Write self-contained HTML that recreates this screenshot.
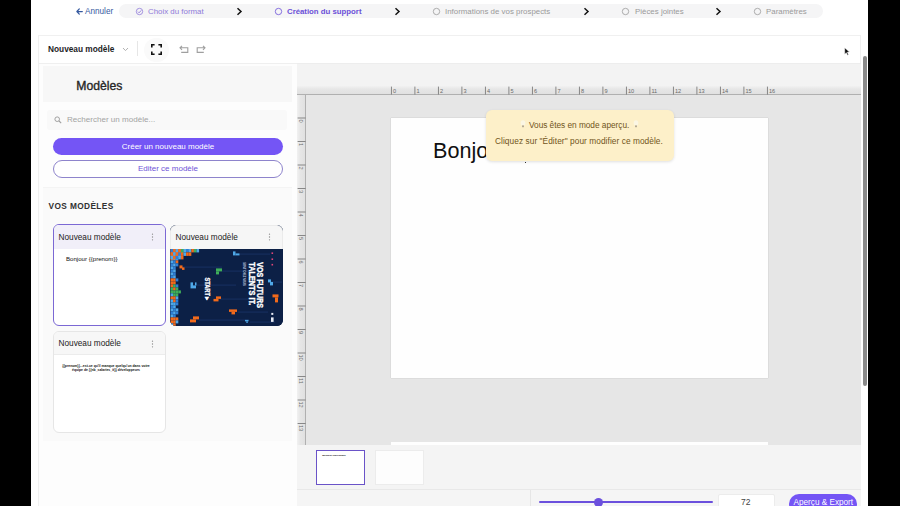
<!DOCTYPE html>
<html lang="fr">
<head>
<meta charset="utf-8">
<title>Création du support</title>
<style>
*{box-sizing:border-box;margin:0;padding:0}
html,body{width:900px;height:506px;overflow:hidden;background:#000}
body{font-family:"Liberation Sans",sans-serif;position:relative;color:#222}
.abs{position:absolute}
.t{position:absolute;white-space:nowrap;line-height:1}
#page{position:absolute;left:31px;top:0;width:837px;height:506px;background:#fff;overflow:hidden}
/* coordinates inside #page are offset by -31 ; use wrapper */
#w{position:absolute;left:-31px;top:0;width:900px;height:506px}
.nav{font-size:8px}
.pill{left:119px;top:4px;width:704px;height:14px;border-radius:7px;background:#f5f5f6}
.chev{width:7px;height:9px}
.step-ic{width:9px;height:9px;margin-top:-0.4px}
#card{left:38px;top:34.5px;width:823px;height:480px;border:1px solid #f0f0f0;background:#fff}
#side{left:39px;top:63px;width:258px;height:450px;background:#fdfdfd;border-top:1px solid #efefef}
#canvasTop{left:297px;top:63px;width:564px;height:24px;background:#f3f3f3;border-top:1px solid #ededed}
#rulerH{left:297px;top:88px;width:564px;height:7px;background:#dedede;border-bottom:1px solid #8e8e8e}
#rulerV{left:297px;top:95px;width:9px;height:350px;background:#dedede;border-right:1px solid #8e8e8e}
#canvas{left:306px;top:95px;width:555px;height:350px;background:#e6e6e6}
.btn{left:53px;width:230px;height:18px;border-radius:9px;font-size:8px;text-align:center;line-height:17px}
.mcard{width:113px;height:102px;border-radius:6px;background:#fff;overflow:hidden}
.mhead{left:0;top:0;width:100%;height:24px}
</style>
</head>
<body>
<div id="page"><div id="w">

<!-- top navigation -->
<svg class="abs" style="left:75.5px;top:7.7px" width="7" height="7" viewBox="0 0 7 7"><path d="M3.3 0.9 L0.9 3.5 L3.3 6.1 M1 3.5 H6.3" fill="none" stroke="#35599f" stroke-width="1.25" stroke-linecap="round" stroke-linejoin="round"/></svg>
<div class="t nav" style="left:85px;top:7.8px;color:#35599f;font-size:8.2px">Annuler</div>
<div class="abs pill"></div>

<svg class="abs step-ic" style="left:135px;top:7px" viewBox="0 0 9 9"><circle cx="4.5" cy="4.5" r="3.2" fill="none" stroke="#8f7ad9" stroke-width="0.8"/><path d="M2.9 4.6 L4.1 5.8 L6.2 3.4" fill="none" stroke="#8f7ad9" stroke-width="0.9"/></svg>
<div class="t nav" style="left:148px;top:7.8px;color:#8f7ad9;font-size:7.9px">Choix du format</div>
<svg class="abs chev" style="left:236px;top:7px" viewBox="0 0 7 9"><path d="M1.5 1.2 L5 4.5 L1.5 7.8" fill="none" stroke="#111" stroke-width="1.5"/></svg>

<svg class="abs step-ic" style="left:274px;top:7px" viewBox="0 0 9 9"><circle cx="4.5" cy="4.5" r="3.2" fill="none" stroke="#6b50d8" stroke-width="0.8"/></svg>
<div class="t nav" style="left:287px;top:7.8px;color:#6b50d8;font-weight:bold;font-size:7.8px">Création du support</div>
<svg class="abs chev" style="left:394px;top:7px" viewBox="0 0 7 9"><path d="M1.5 1.2 L5 4.5 L1.5 7.8" fill="none" stroke="#111" stroke-width="1.5"/></svg>

<svg class="abs step-ic" style="left:432px;top:7px" viewBox="0 0 9 9"><circle cx="4.5" cy="4.5" r="3.2" fill="none" stroke="#9a9a9a" stroke-width="0.8"/></svg>
<div class="t nav" style="left:445px;top:7.8px;color:#9a9a9a;font-size:7.9px">Informations de vos prospects</div>
<svg class="abs chev" style="left:583px;top:7px" viewBox="0 0 7 9"><path d="M1.5 1.2 L5 4.5 L1.5 7.8" fill="none" stroke="#111" stroke-width="1.5"/></svg>

<svg class="abs step-ic" style="left:621px;top:7px" viewBox="0 0 9 9"><circle cx="4.5" cy="4.5" r="3.2" fill="none" stroke="#9a9a9a" stroke-width="0.8"/></svg>
<div class="t nav" style="left:635px;top:7.8px;color:#9a9a9a;font-size:7.9px">Pièces jointes</div>
<svg class="abs chev" style="left:715px;top:7px" viewBox="0 0 7 9"><path d="M1.5 1.2 L5 4.5 L1.5 7.8" fill="none" stroke="#111" stroke-width="1.5"/></svg>

<svg class="abs step-ic" style="left:753px;top:7px" viewBox="0 0 9 9"><circle cx="4.5" cy="4.5" r="3.2" fill="none" stroke="#9a9a9a" stroke-width="0.8"/></svg>
<div class="t nav" style="left:766px;top:7.8px;color:#9a9a9a;font-size:7.9px">Paramètres</div>

<!-- main card -->
<div class="abs" id="card"></div>

<!-- toolbar -->
<div class="t" style="left:48px;top:45px;font-size:8.3px;font-weight:bold;color:#1d1d1f">Nouveau modèle</div>
<svg class="abs" style="left:122px;top:47px" width="7" height="5" viewBox="0 0 7 5"><path d="M1 1 L3.5 3.6 L6 1" fill="none" stroke="#a9a9a9" stroke-width="0.9"/></svg>
<div class="abs" style="left:137px;top:41px;width:1px;height:15px;background:#e6e6e6"></div>
<div class="abs" style="left:144px;top:37.5px;width:25px;height:24px;border-radius:12px;background:#fafafa"></div>
<svg class="abs" style="left:151px;top:44px" width="11" height="11" viewBox="0 0 11 11"><path d="M0.8 3.6 V0.8 H3.6 M7.4 0.8 H10.2 V3.6 M10.2 7.4 V10.2 H7.4 M3.6 10.2 H0.8 V7.4" fill="none" stroke="#111" stroke-width="1.6"/></svg>
<svg class="abs" style="left:179px;top:44.6px" width="10" height="9" viewBox="0 0 10 9"><path d="M3 0.8 L1 2.8 L3 4.8 M1.2 2.8 H8.8 V7.4 H2.2" fill="none" stroke="#9f9f9f" stroke-width="1.1"/></svg>
<svg class="abs" style="left:196px;top:44.6px" width="10" height="9" viewBox="0 0 10 9"><path d="M7 0.8 L9 2.8 L7 4.8 M8.8 2.8 H1.2 V7.4 H7.8" fill="none" stroke="#9f9f9f" stroke-width="1.1"/></svg>

<!-- SIDEBAR -->
<div class="abs" id="side"></div>
<div class="abs" style="left:43px;top:66px;width:249px;height:36px;background:#f7f7f7"></div>
<div class="t" style="left:76.3px;top:80px;font-size:12.2px;color:#262626;-webkit-text-stroke:0.35px #262626">Modèles</div>

<div class="abs" style="left:47px;top:110px;width:240px;height:20px;background:#f9f9f9;border-radius:3px"></div>
<svg class="abs" style="left:54px;top:116px" width="8" height="8" viewBox="0 0 8 8"><circle cx="3.2" cy="3.2" r="2.3" fill="none" stroke="#a0a0a0" stroke-width="1"/><path d="M5 5 L7.2 7.2" stroke="#a0a0a0" stroke-width="1.1"/></svg>
<div class="t" style="left:67px;top:116px;font-size:8.05px;color:#a3a3a3">Rechercher un modèle...</div>

<div class="abs btn" style="top:137.7px;height:17.2px;background:#7455f5;color:#fff;line-height:17.6px">Créer un nouveau modèle</div>
<div class="abs btn" style="top:160px;background:#fff;border:1px solid #8e84cc;color:#6f55d8;line-height:16px">Editer ce modèle</div>

<div class="abs" style="left:43px;top:187px;width:249px;height:254px;background:#fafafa;border-top:1px solid #f4f4f4"></div>
<div class="t" style="left:48.6px;top:201.6px;font-size:8.3px;font-weight:bold;letter-spacing:0.38px;color:#303030">VOS MODÈLES</div>

<!-- card 1 -->
<div class="abs mcard" style="left:53px;top:224.3px;width:112.6px;border:1.5px solid #7b68d4">
  <div class="abs mhead" style="background:#f1eff9"></div>
  <div class="t" style="left:4.5px;top:8.6px;font-size:8.25px;color:#222">Nouveau modèle</div>
  <svg class="abs" style="left:96.7px;top:8px" width="3" height="8" viewBox="0 0 3 8"><circle cx="1.5" cy="1.2" r="0.65" fill="#8a8a8a"/><circle cx="1.5" cy="4" r="0.65" fill="#8a8a8a"/><circle cx="1.5" cy="6.8" r="0.65" fill="#8a8a8a"/></svg>
  <div class="t" style="left:12px;top:30.5px;font-size:6.1px;color:#111">Bonjour {{prenom}}</div>
</div>

<!-- card 2 -->
<div class="abs" style="left:170px;top:225px;width:113px;height:101px;border-radius:6px;overflow:hidden;background:#0c2046">
  <div class="abs" style="left:0;top:0;width:113px;height:23.5px;background:#f6f6f6;border:1px solid #ebebeb;border-bottom:none;border-radius:6px 6px 0 0"></div>
  <div class="t" style="left:5.5px;top:9px;font-size:8.25px;color:#222">Nouveau modèle</div>
  <svg class="abs" style="left:98.2px;top:8px" width="3" height="8" viewBox="0 0 3 8"><circle cx="1.5" cy="1.2" r="0.65" fill="#8a8a8a"/><circle cx="1.5" cy="4" r="0.65" fill="#8a8a8a"/><circle cx="1.5" cy="6.8" r="0.65" fill="#8a8a8a"/></svg>
  <div class="abs" style="left:-170px;top:-225px;width:900px;height:506px"><svg class="abs" style="left:170px;top:248.6px" width="113" height="77.4" viewBox="170 248.6 113 77.4"><rect x="170" y="248" width="113" height="78" fill="#0c2046"/><rect x="182" y="266" width="40" height="1.4" fill="#152c5a"/><rect x="222" y="270" width="30" height="1.4" fill="#152c5a"/><rect x="196" y="284" width="40" height="1.4" fill="#152c5a"/><rect x="220" y="298" width="40" height="1.4" fill="#152c5a"/><rect x="199" y="319" width="50" height="1.4" fill="#152c5a"/><rect x="240" y="253" width="30" height="1.4" fill="#152c5a"/><rect x="238" y="311" width="30" height="1.4" fill="#152c5a"/><rect x="250" y="321" width="25" height="1.4" fill="#152c5a"/><rect x="273" y="281" width="9" height="1.4" fill="#152c5a"/><rect x="170.5" y="248" width="2.6" height="3" fill="#f26a1b"/><rect x="173.1" y="248" width="2.6" height="3" fill="#f26a1b"/><rect x="175.7" y="248" width="2.6" height="3" fill="#4fa8e8"/><rect x="178.3" y="248" width="2.6" height="3" fill="#f26a1b"/><rect x="180.9" y="248" width="2.6" height="3" fill="#3fae5a"/><rect x="183.5" y="248" width="2.6" height="3" fill="#3fae5a"/><rect x="186.1" y="248" width="2.6" height="3" fill="#4fa8e8"/><rect x="170.5" y="251" width="2.6" height="3" fill="#f26a1b"/><rect x="173.1" y="251" width="2.6" height="3" fill="#4fa8e8"/><rect x="175.7" y="251" width="2.6" height="3" fill="#f26a1b"/><rect x="178.3" y="251" width="2.6" height="3" fill="#f26a1b"/><rect x="180.9" y="251" width="2.6" height="3" fill="#3fae5a"/><rect x="170.5" y="254" width="2.6" height="3" fill="#4fa8e8"/><rect x="173.1" y="254" width="2.6" height="3" fill="#f26a1b"/><rect x="175.7" y="254" width="2.6" height="3" fill="#f26a1b"/><rect x="178.3" y="254" width="2.6" height="3" fill="#4fa8e8"/><rect x="170.5" y="257" width="2.6" height="3" fill="#f26a1b"/><rect x="173.1" y="257" width="2.6" height="3" fill="#4fa8e8"/><rect x="175.7" y="257" width="2.6" height="3" fill="#4fa8e8"/><rect x="170.5" y="260" width="2.6" height="3" fill="#4fa8e8"/><rect x="173.1" y="260" width="2.6" height="3" fill="#2f7fd6"/><rect x="175.7" y="260" width="2.6" height="3" fill="#f26a1b"/><rect x="170.5" y="263" width="2.6" height="3" fill="#2f7fd6"/><rect x="173.1" y="263" width="2.6" height="3" fill="#4fa8e8"/><rect x="175.7" y="263" width="2.6" height="3" fill="#2f7fd6"/><rect x="170.5" y="266" width="2.6" height="3" fill="#4fa8e8"/><rect x="173.1" y="266" width="2.6" height="3" fill="#2f7fd6"/><rect x="170.5" y="269" width="2.6" height="3" fill="#2f7fd6"/><rect x="173.1" y="269" width="2.6" height="3" fill="#4fa8e8"/><rect x="170.5" y="272" width="2.6" height="3" fill="#4fa8e8"/><rect x="173.1" y="272" width="2.6" height="3" fill="#2f7fd6"/><rect x="170.5" y="275" width="2.6" height="3" fill="#2f7fd6"/><rect x="173.1" y="275" width="2.6" height="3" fill="#4fa8e8"/><rect x="170.5" y="278" width="2.6" height="3" fill="#f26a1b"/><rect x="173.1" y="278" width="2.6" height="3" fill="#f26a1b"/><rect x="175.7" y="278" width="2.6" height="3" fill="#2f7fd6"/><rect x="170.5" y="281" width="2.6" height="3" fill="#f26a1b"/><rect x="173.1" y="281" width="2.6" height="3" fill="#f26a1b"/><rect x="170.5" y="284" width="2.6" height="3" fill="#f26a1b"/><rect x="173.1" y="284" width="2.6" height="3" fill="#3fae5a"/><rect x="175.7" y="284" width="2.6" height="3" fill="#2f7fd6"/><rect x="170.5" y="287" width="2.6" height="3" fill="#3fae5a"/><rect x="173.1" y="287" width="2.6" height="3" fill="#f26a1b"/><rect x="175.7" y="287" width="2.6" height="3" fill="#3fae5a"/><rect x="170.5" y="290" width="2.6" height="3" fill="#3fae5a"/><rect x="173.1" y="290" width="2.6" height="3" fill="#3fae5a"/><rect x="175.7" y="290" width="2.6" height="3" fill="#3fae5a"/><rect x="178.3" y="290" width="2.6" height="3" fill="#3fae5a"/><rect x="170.5" y="293" width="2.6" height="3" fill="#4fa8e8"/><rect x="173.1" y="293" width="2.6" height="3" fill="#3fae5a"/><rect x="175.7" y="293" width="2.6" height="3" fill="#3fae5a"/><rect x="170.5" y="296" width="2.6" height="3" fill="#f26a1b"/><rect x="173.1" y="296" width="2.6" height="3" fill="#f26a1b"/><rect x="175.7" y="296" width="2.6" height="3" fill="#4fa8e8"/><rect x="170.5" y="299" width="2.6" height="3" fill="#4fa8e8"/><rect x="173.1" y="299" width="2.6" height="3" fill="#f26a1b"/><rect x="175.7" y="299" width="2.6" height="3" fill="#2f7fd6"/><rect x="170.5" y="302" width="2.6" height="3" fill="#4fa8e8"/><rect x="173.1" y="302" width="2.6" height="3" fill="#4fa8e8"/><rect x="175.7" y="302" width="2.6" height="3" fill="#2f7fd6"/><rect x="170.5" y="305" width="2.6" height="3" fill="#2f7fd6"/><rect x="173.1" y="305" width="2.6" height="3" fill="#4fa8e8"/><rect x="170.5" y="308" width="2.6" height="3" fill="#4fa8e8"/><rect x="173.1" y="308" width="2.6" height="3" fill="#2f7fd6"/><rect x="175.7" y="308" width="2.6" height="3" fill="#4fa8e8"/><rect x="170.5" y="311" width="2.6" height="3" fill="#2f7fd6"/><rect x="173.1" y="311" width="2.6" height="3" fill="#4fa8e8"/><rect x="175.7" y="311" width="2.6" height="3" fill="#2f7fd6"/><rect x="170.5" y="314" width="2.6" height="3" fill="#4fa8e8"/><rect x="173.1" y="314" width="2.6" height="3" fill="#2f7fd6"/><rect x="170.5" y="317" width="2.6" height="3" fill="#f26a1b"/><rect x="173.1" y="317" width="2.6" height="3" fill="#f26a1b"/><rect x="175.7" y="317" width="2.6" height="3" fill="#f26a1b"/><rect x="170.5" y="320" width="2.6" height="3" fill="#f26a1b"/><rect x="173.1" y="320" width="2.6" height="3" fill="#f26a1b"/><rect x="175.7" y="320" width="2.6" height="3" fill="#4fa8e8"/><rect x="170.5" y="323" width="2.6" height="3" fill="#4fa8e8"/><rect x="173.1" y="323" width="2.6" height="3" fill="#f26a1b"/><rect x="179.5" y="265" width="3" height="3" fill="#f26a1b"/><rect x="182" y="267" width="2.5" height="2.5" fill="#f26a1b"/><rect x="216" y="268" width="6" height="3" fill="#3fae5a"/><rect x="216" y="271" width="3" height="3" fill="#3fae5a"/><rect x="190.5" y="282" width="2.5" height="6" fill="#4fa8e8"/><rect x="193" y="285" width="3" height="3" fill="#4fa8e8"/><rect x="195" y="282" width="1.5" height="3" fill="#4fa8e8"/><rect x="216" y="296" width="5" height="2.5" fill="#f26a1b"/><rect x="213.5" y="298.5" width="5" height="2.5" fill="#f26a1b"/><rect x="193" y="316" width="6" height="3" fill="#f26a1b"/><rect x="190" y="319" width="6" height="3" fill="#f26a1b"/><rect x="233" y="251" width="2.5" height="4" fill="#4fa8e8"/><rect x="235.5" y="253" width="4" height="2" fill="#4fa8e8"/><rect x="271.5" y="252" width="1.6" height="1.6" fill="#e0457a"/><rect x="271.5" y="258" width="1.6" height="1.6" fill="#e0457a"/><rect x="271.5" y="263.5" width="1.6" height="1.6" fill="#e0457a"/><rect x="268" y="279" width="3" height="3" fill="#4fa8e8"/><rect x="270" y="281.5" width="3" height="3.5" fill="#4fa8e8"/><rect x="272.5" y="294" width="6" height="3" fill="#f26a1b"/><rect x="275" y="297" width="3" height="5" fill="#f26a1b"/><rect x="229" y="309" width="8" height="2.5" fill="#f26a1b"/><rect x="231.5" y="311.5" width="3.5" height="2.5" fill="#f26a1b"/><rect x="245" y="319.5" width="3.5" height="1.5" fill="#4fa8e8"/><rect x="246.3" y="321" width="1.5" height="1.5" fill="#4fa8e8"/><rect x="271.3" y="312.5" width="2" height="2" fill="#e8ecf5"/><rect x="271" y="317" width="2.6" height="4.5" fill="#e8ecf5"/><rect x="170.5" y="248" width="2.6" height="4" fill="#2f7fd6"/><rect x="173.1" y="248" width="2.6" height="4" fill="#f26a1b"/><rect x="175.7" y="248" width="2.6" height="4" fill="#4fa8e8"/><rect x="178.3" y="248" width="2.6" height="4" fill="#f26a1b"/><rect x="180.9" y="248" width="2.6" height="4" fill="#3fae5a"/><rect x="183.5" y="248" width="2.6" height="4" fill="#4fa8e8"/><rect x="186.1" y="248" width="2.6" height="4" fill="#2f7fd6"/><rect x="188.7" y="248" width="2.6" height="4" fill="#4fa8e8"/><rect x="191.3" y="248" width="2.6" height="4" fill="#f26a1b"/><rect x="193.9" y="248" width="2.6" height="4" fill="#3fae5a"/><rect x="196.5" y="248" width="2.6" height="4" fill="#4fa8e8"/><rect x="170.5" y="252" width="2.6" height="3.5" fill="#f26a1b"/><rect x="173.1" y="252" width="2.6" height="3.5" fill="#4fa8e8"/><rect x="175.7" y="252" width="2.6" height="3.5" fill="#f26a1b"/><rect x="178.3" y="252" width="2.6" height="3.5" fill="#2f7fd6"/><rect x="180.9" y="252" width="2.6" height="3.5" fill="#f26a1b"/><rect x="183.5" y="252" width="2.6" height="3.5" fill="#4fa8e8"/><rect x="186.1" y="252" width="2.6" height="3.5" fill="#f26a1b"/><rect x="188.7" y="252" width="2.6" height="3.5" fill="#f26a1b"/><rect x="170.5" y="255.5" width="2.6" height="3.5" fill="#4fa8e8"/><rect x="173.1" y="255.5" width="2.6" height="3.5" fill="#f26a1b"/><rect x="175.7" y="255.5" width="2.6" height="3.5" fill="#2f7fd6"/><rect x="178.3" y="255.5" width="2.6" height="3.5" fill="#4fa8e8"/><rect x="180.9" y="255.5" width="2.6" height="3.5" fill="#f26a1b"/><text transform="translate(257.3 261.8) rotate(90)" font-family="Liberation Sans, sans-serif" font-weight="bold" font-size="8.6" fill="#fff" stroke="#fff" stroke-width="0.35" textLength="45.7" lengthAdjust="spacingAndGlyphs">VOS FUTURS</text><text transform="translate(248.6 261.8) rotate(90)" font-family="Liberation Sans, sans-serif" font-weight="bold" font-size="8.6" fill="#fff" stroke="#fff" stroke-width="0.35" textLength="43" lengthAdjust="spacingAndGlyphs">TALENTS IT.</text><text transform="translate(243 261.8) rotate(90)" font-family="Liberation Sans, sans-serif" font-weight="bold" font-size="2.8" fill="#c4cde2" textLength="23.5" lengthAdjust="spacingAndGlyphs">SONT CHEZ NOUS</text><text transform="translate(204.6 277) rotate(90)" font-family="Liberation Sans, sans-serif" font-weight="bold" font-size="6.6" fill="#fff" stroke="#fff" stroke-width="0.3" textLength="23.5" lengthAdjust="spacingAndGlyphs">START ▸</text></svg></div>
</div>

<!-- card 3 -->
<div class="abs mcard" style="left:53px;top:331px;width:113px;height:102px;border:1px solid #e6e6e6">
  <div class="abs mhead" style="background:#f7f7f7;height:23px;border-bottom:1px solid #ececec"></div>
  <div class="t" style="left:4.5px;top:8px;font-size:8.25px;color:#222">Nouveau modèle</div>
  <svg class="abs" style="left:97.2px;top:7.5px" width="3" height="8" viewBox="0 0 3 8"><circle cx="1.5" cy="1.2" r="0.65" fill="#8a8a8a"/><circle cx="1.5" cy="4" r="0.65" fill="#8a8a8a"/><circle cx="1.5" cy="6.8" r="0.65" fill="#8a8a8a"/></svg>
  <div class="t" style="left:5px;top:32.1px;font-size:3.42px;color:#111;line-height:4.3px;text-align:center;width:94px;white-space:normal;font-weight:bold">{{prenom}}...est-ce qu'il manque quelqu'un dans votre<br>équipe de {{nb_salaries_it}} développeurs</div>
</div>

<!-- CANVAS -->
<div class="abs" id="canvasTop"></div>
<svg class="abs" style="left:297px;top:85.5px" width="564" height="9.5" viewBox="0 0 564 9.5"><defs><linearGradient id="gh" x1="0" y1="0" x2="0" y2="1"><stop offset="0" stop-color="#f1f1f1"/><stop offset="0.35" stop-color="#e6e6e6"/><stop offset="1" stop-color="#dfdfdf"/></linearGradient><linearGradient id="gv" x1="0" y1="0" x2="1" y2="0"><stop offset="0" stop-color="#f1f1f1"/><stop offset="0.35" stop-color="#e6e6e6"/><stop offset="1" stop-color="#dfdfdf"/></linearGradient></defs><rect width="564" height="9.5" fill="url(#gh)"/><rect y="8.3" width="564" height="1" fill="#9b9b9b"/><rect x="93.95" y="0.6" width="0.9" height="8" fill="#7d7d7d"/><text x="95.9" y="7.4" font-family="Liberation Sans, sans-serif" font-size="5.6" fill="#6a6a6a">0</text><rect x="117.45" y="0.6" width="0.9" height="8" fill="#7d7d7d"/><text x="119.4" y="7.4" font-family="Liberation Sans, sans-serif" font-size="5.6" fill="#6a6a6a">1</text><rect x="140.95" y="0.6" width="0.9" height="8" fill="#7d7d7d"/><text x="142.9" y="7.4" font-family="Liberation Sans, sans-serif" font-size="5.6" fill="#6a6a6a">2</text><rect x="164.45" y="0.6" width="0.9" height="8" fill="#7d7d7d"/><text x="166.4" y="7.4" font-family="Liberation Sans, sans-serif" font-size="5.6" fill="#6a6a6a">3</text><rect x="187.95" y="0.6" width="0.9" height="8" fill="#7d7d7d"/><text x="189.9" y="7.4" font-family="Liberation Sans, sans-serif" font-size="5.6" fill="#6a6a6a">4</text><rect x="211.45" y="0.6" width="0.9" height="8" fill="#7d7d7d"/><text x="213.4" y="7.4" font-family="Liberation Sans, sans-serif" font-size="5.6" fill="#6a6a6a">5</text><rect x="234.95" y="0.6" width="0.9" height="8" fill="#7d7d7d"/><text x="236.9" y="7.4" font-family="Liberation Sans, sans-serif" font-size="5.6" fill="#6a6a6a">6</text><rect x="258.45" y="0.6" width="0.9" height="8" fill="#7d7d7d"/><text x="260.4" y="7.4" font-family="Liberation Sans, sans-serif" font-size="5.6" fill="#6a6a6a">7</text><rect x="281.95" y="0.6" width="0.9" height="8" fill="#7d7d7d"/><text x="283.9" y="7.4" font-family="Liberation Sans, sans-serif" font-size="5.6" fill="#6a6a6a">8</text><rect x="305.45" y="0.6" width="0.9" height="8" fill="#7d7d7d"/><text x="307.4" y="7.4" font-family="Liberation Sans, sans-serif" font-size="5.6" fill="#6a6a6a">9</text><rect x="328.95" y="0.6" width="0.9" height="8" fill="#7d7d7d"/><text x="330.9" y="7.4" font-family="Liberation Sans, sans-serif" font-size="5.6" fill="#6a6a6a">10</text><rect x="352.45" y="0.6" width="0.9" height="8" fill="#7d7d7d"/><text x="354.4" y="7.4" font-family="Liberation Sans, sans-serif" font-size="5.6" fill="#6a6a6a">11</text><rect x="375.95" y="0.6" width="0.9" height="8" fill="#7d7d7d"/><text x="377.9" y="7.4" font-family="Liberation Sans, sans-serif" font-size="5.6" fill="#6a6a6a">12</text><rect x="399.45" y="0.6" width="0.9" height="8" fill="#7d7d7d"/><text x="401.4" y="7.4" font-family="Liberation Sans, sans-serif" font-size="5.6" fill="#6a6a6a">13</text><rect x="422.95" y="0.6" width="0.9" height="8" fill="#7d7d7d"/><text x="424.9" y="7.4" font-family="Liberation Sans, sans-serif" font-size="5.6" fill="#6a6a6a">14</text><rect x="446.45" y="0.6" width="0.9" height="8" fill="#7d7d7d"/><text x="448.4" y="7.4" font-family="Liberation Sans, sans-serif" font-size="5.6" fill="#6a6a6a">15</text><rect x="469.95" y="0.6" width="0.9" height="8" fill="#7d7d7d"/><text x="471.9" y="7.4" font-family="Liberation Sans, sans-serif" font-size="5.6" fill="#6a6a6a">16</text></svg>
<svg class="abs" style="left:296.5px;top:95px" width="9.5" height="350" viewBox="0 0 9.5 350"><rect width="9.5" height="350" fill="url(#gv)"/><rect x="8.3" width="1" height="350" fill="#9b9b9b"/><rect x="0.6" y="22.55" width="8" height="0.9" fill="#7d7d7d"/><text transform="translate(2.2 24.5) rotate(90)" font-family="Liberation Sans, sans-serif" font-size="5.6" fill="#6a6a6a">0</text><rect x="0.6" y="46.05" width="8" height="0.9" fill="#7d7d7d"/><text transform="translate(2.2 48.0) rotate(90)" font-family="Liberation Sans, sans-serif" font-size="5.6" fill="#6a6a6a">1</text><rect x="0.6" y="69.55" width="8" height="0.9" fill="#7d7d7d"/><text transform="translate(2.2 71.5) rotate(90)" font-family="Liberation Sans, sans-serif" font-size="5.6" fill="#6a6a6a">2</text><rect x="0.6" y="93.05" width="8" height="0.9" fill="#7d7d7d"/><text transform="translate(2.2 95.0) rotate(90)" font-family="Liberation Sans, sans-serif" font-size="5.6" fill="#6a6a6a">3</text><rect x="0.6" y="116.55" width="8" height="0.9" fill="#7d7d7d"/><text transform="translate(2.2 118.5) rotate(90)" font-family="Liberation Sans, sans-serif" font-size="5.6" fill="#6a6a6a">4</text><rect x="0.6" y="140.05" width="8" height="0.9" fill="#7d7d7d"/><text transform="translate(2.2 142.0) rotate(90)" font-family="Liberation Sans, sans-serif" font-size="5.6" fill="#6a6a6a">5</text><rect x="0.6" y="163.55" width="8" height="0.9" fill="#7d7d7d"/><text transform="translate(2.2 165.5) rotate(90)" font-family="Liberation Sans, sans-serif" font-size="5.6" fill="#6a6a6a">6</text><rect x="0.6" y="187.05" width="8" height="0.9" fill="#7d7d7d"/><text transform="translate(2.2 189.0) rotate(90)" font-family="Liberation Sans, sans-serif" font-size="5.6" fill="#6a6a6a">7</text><rect x="0.6" y="210.55" width="8" height="0.9" fill="#7d7d7d"/><text transform="translate(2.2 212.5) rotate(90)" font-family="Liberation Sans, sans-serif" font-size="5.6" fill="#6a6a6a">8</text><rect x="0.6" y="234.05" width="8" height="0.9" fill="#7d7d7d"/><text transform="translate(2.2 236.0) rotate(90)" font-family="Liberation Sans, sans-serif" font-size="5.6" fill="#6a6a6a">9</text><rect x="0.6" y="257.55" width="8" height="0.9" fill="#7d7d7d"/><text transform="translate(2.2 259.5) rotate(90)" font-family="Liberation Sans, sans-serif" font-size="5.6" fill="#6a6a6a">10</text><rect x="0.6" y="281.05" width="8" height="0.9" fill="#7d7d7d"/><text transform="translate(2.2 283.0) rotate(90)" font-family="Liberation Sans, sans-serif" font-size="5.6" fill="#6a6a6a">11</text><rect x="0.6" y="304.55" width="8" height="0.9" fill="#7d7d7d"/><text transform="translate(2.2 306.5) rotate(90)" font-family="Liberation Sans, sans-serif" font-size="5.6" fill="#6a6a6a">12</text><rect x="0.6" y="328.05" width="8" height="0.9" fill="#7d7d7d"/><text transform="translate(2.2 330.0) rotate(90)" font-family="Liberation Sans, sans-serif" font-size="5.6" fill="#6a6a6a">13</text></svg>
<div class="abs" id="canvas"></div>
<div class="abs" style="left:391px;top:118px;width:376.6px;height:260px;background:#fefefe;box-shadow:0 0 1px rgba(0,0,0,.25)"></div>
<div class="abs" style="left:391px;top:441.5px;width:376.6px;height:10px;background:#fefefe"></div>
<div class="t" style="left:433px;top:139.6px;font-size:21.6px;color:#111">Bonjour</div>
<div class="abs" style="left:525px;top:161.6px;width:1.3px;height:1.4px;background:#333"></div>

<!-- toast -->
<div class="abs" style="left:486px;top:110px;width:188px;height:51px;background:#fdf0c9;border-radius:6px;box-shadow:0 1px 3px rgba(0,0,0,.12)"></div>
<div class="t" style="left:529px;top:120.8px;font-size:8.3px;letter-spacing:-0.03px;color:#705420">Vous êtes en mode aperçu.</div>
<div class="t" style="left:495px;top:137px;font-size:8.3px;letter-spacing:0.065px;color:#705420">Cliquez sur "Éditer" pour modifier ce modèle.</div>

<svg class="abs" style="left:519.5px;top:120.3px" width="6" height="8" viewBox="0 0 6 8"><ellipse cx="3" cy="3" rx="2.3" ry="2.8" fill="#fbf6e3"/><rect x="2" y="5.4" width="2" height="1.8" fill="#b5ab95"/></svg>
<svg class="abs" style="left:633px;top:120.3px" width="6" height="8" viewBox="0 0 6 8"><ellipse cx="3" cy="3" rx="2.3" ry="2.8" fill="#fbf6e3"/><rect x="2" y="5.4" width="2" height="1.8" fill="#b5ab95"/></svg>
<!-- thumbnails strip -->
<div class="abs" style="left:297px;top:445px;width:564px;height:45px;background:#f4f4f4;border-bottom:1px solid #e8e8e8"></div>
<div class="abs" style="left:316px;top:450px;width:49px;height:35px;background:#fff;border:1px solid #6a53c8"></div>
<div class="t" style="left:322.3px;top:454.6px;font-size:2.5px;color:#222;font-weight:bold">Bonjour {{prenom}}</div>
<div class="abs" style="left:375px;top:450px;width:49px;height:35px;background:#fdfdfd;border:1px solid #ececec"></div>

<!-- bottom bar -->
<div class="abs" style="left:297px;top:490px;width:564px;height:16px;background:#f5f5f5"></div>
<div class="abs" style="left:530px;top:490px;width:1px;height:16px;background:#e6e6e6"></div>
<div class="abs" style="left:539px;top:501px;width:174px;height:2.4px;border-radius:1px;background:#6b50dd"></div>
<div class="abs" style="left:594px;top:497.5px;width:9px;height:9px;border-radius:5px;background:#6b50dd"></div>
<div class="abs" style="left:718px;top:494px;width:57px;height:16px;background:#fff;border:1px solid #ececec;border-radius:2px"></div>
<div class="t" style="left:741px;top:498px;font-size:8.5px;color:#444">72</div>
<div class="abs" style="left:789px;top:494px;width:68px;height:20px;border-radius:10px;background:#7455f5"></div>
<div class="t" style="left:793.5px;top:498.5px;font-size:8.2px;color:#fff">Aperçu &amp; Export</div>

<!-- scrollbar -->
<div class="abs" style="left:863px;top:55.7px;width:4.1px;height:330.5px;border-radius:2px;background:#8a8a8a"></div>
<!-- cursor -->
<svg class="abs" style="left:844.2px;top:46.6px" width="6.3" height="9.1" viewBox="0 0 9 13"><path d="M1 1 L1 10.2 L3.3 8.1 L5 11.8 L6.5 11.1 L4.8 7.5 L7.8 7.3 Z" fill="#111" stroke="#fff" stroke-width="0.7"/></svg>

</div></div>
</body>
</html>
